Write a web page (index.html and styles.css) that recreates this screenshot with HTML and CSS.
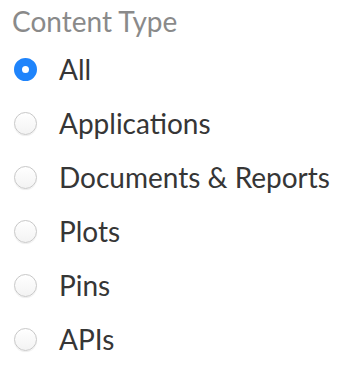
FILE: index.html
```html
<html lang="en">
<head>
    <meta charset="UTF-8">
    <title>Content Type</title>
    <link rel="stylesheet" href="styles.css">
</head>
<body>
    <div class="filtro">
        <div class="titulo">Content Type</div>
        <label class="opcion"><input type="radio" name="tipo" checked><span>All</span></label>
        <label class="opcion"><input type="radio" name="tipo"><span>Applications</span></label>
        <label class="opcion"><input type="radio" name="tipo"><span>Documents &amp; Reports</span></label>
        <label class="opcion"><input type="radio" name="tipo"><span>Plots</span></label>
        <label class="opcion"><input type="radio" name="tipo"><span>Pins</span></label>
        <label class="opcion"><input type="radio" name="tipo"><span>APIs</span></label>
    </div>
</body>
</html>
```

FILE: styles.css
```css
body {
    margin: 0;
    font-family: Lato, "Open Sans", sans-serif;
    background-color: white;
}

.filtro {
    padding: 4px 0 0 12px;
}

.titulo {
    font-size: 28px;
    color: #8a8a8a;
    line-height: 34px;
    margin-bottom: 4px;
}

.opcion {
    display: flex;
    align-items: center;
    height: 54px;
    font-size: 28px;
    color: #363636;
    cursor: pointer;
}

.opcion input {
    appearance: none;
    box-sizing: border-box;
    width: 23px;
    height: 23px;
    margin: 0 22px 0 2px;
    border-radius: 50%;
    border: 1px solid #c8c8c8;
    background: linear-gradient(#fff, #f3f3f3);
    box-shadow: 0 1px 1px rgba(0, 0, 0, 0.07);
}

.opcion input:checked {
    border: 8px solid #1f84fb;
    background: white;
    box-shadow: none;
}
```
